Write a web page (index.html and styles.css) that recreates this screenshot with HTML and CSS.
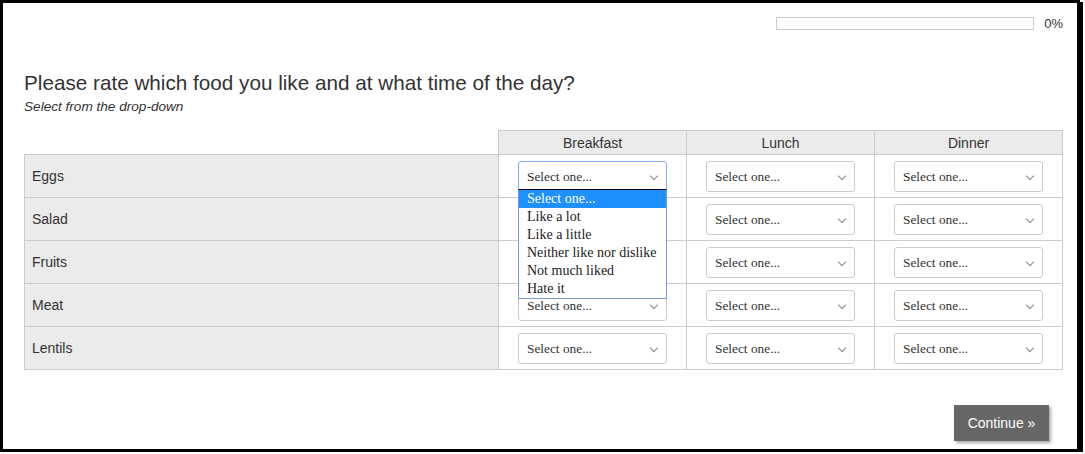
FILE: index.html
```html
<!DOCTYPE html>
<html lang="en">
<head>
  <meta charset="UTF-8" />
  <meta name="viewport" content="width=device-width, initial-scale=1.0"/>
  <title>Food Survey</title>
  <link rel="stylesheet" href="styles.css">
</head>
<body>

<div class="frame">
  <!-- Progress -->
  <div class="progress">
    <div class="progress-bar"><div class="progress-fill"></div></div>
    <span class="progress-text">0%</span>
  </div>

  <!-- Question -->
  <h1 class="question">Please rate which food you like and at what time of the day?</h1>
  <p class="hint">Select from the drop-down</p>

  <table class="matrix">
    <thead>
      <tr>
        <th class="blank"></th>
        <th>Breakfast</th>
        <th>Lunch</th>
        <th>Dinner</th>
      </tr>
    </thead>
    <tbody>
      <tr>
        <td class="label">Eggs</td>
        <td>
          <div class="select focused">
            <span class="select-value">Select one...</span>
            <ul class="dropdown">
              <li class="active">Select one...</li>
              <li>Like a lot</li>
              <li>Like a little</li>
              <li>Neither like nor dislike</li>
              <li>Not much liked</li>
              <li>Hate it</li>
            </ul>
          </div>
        </td>
        <td><div class="select"><span class="select-value">Select one...</span></div></td>
        <td><div class="select"><span class="select-value">Select one...</span></div></td>
      </tr>
      <tr>
        <td class="label">Salad</td>
        <td><div class="select"><span class="select-value">Select one...</span></div></td>
        <td><div class="select"><span class="select-value">Select one...</span></div></td>
        <td><div class="select"><span class="select-value">Select one...</span></div></td>
      </tr>
      <tr>
        <td class="label">Fruits</td>
        <td><div class="select"><span class="select-value">Select one...</span></div></td>
        <td><div class="select"><span class="select-value">Select one...</span></div></td>
        <td><div class="select"><span class="select-value">Select one...</span></div></td>
      </tr>
      <tr>
        <td class="label">Meat</td>
        <td><div class="select"><span class="select-value">Select one...</span></div></td>
        <td><div class="select"><span class="select-value">Select one...</span></div></td>
        <td><div class="select"><span class="select-value">Select one...</span></div></td>
      </tr>
      <tr>
        <td class="label">Lentils</td>
        <td><div class="select"><span class="select-value">Select one...</span></div></td>
        <td><div class="select"><span class="select-value">Select one...</span></div></td>
        <td><div class="select"><span class="select-value">Select one...</span></div></td>
      </tr>
    </tbody>
  </table>

  <div class="actions">
    <button class="btn-continue">Continue &raquo;</button>
  </div>
</div>

</body>
</html>
```

FILE: styles.css
```css
/* Basic reset */
* { margin: 0; padding: 0; box-sizing: border-box; }
body { font-family: "Liberation Sans", Arial, sans-serif; background: #fff; color: #333; }

/* Outer frame */
.frame { width: 1080px; height: 452px; border: 3px solid #000; box-shadow: 3px 2px 0 #000; padding: 0 14px 0 21px; background: #fff; }

/* Progress */
.progress { display: flex; justify-content: flex-end; align-items: center; gap: 10px; padding-top: 14px; }
.progress-bar { width: 258px; height: 13px; border: 1px solid #ccc; background: #fff; }
.progress-fill { width: 0; height: 100%; background: #666; }
.progress-text { font-size: 13px; color: #333; line-height: 13px; }

/* Question */
.question { font-size: 20.7px; font-weight: normal; line-height: 23px; margin-top: 41px; color: #333; }
.hint { font-size: 13.6px; font-style: italic; line-height: 15px; margin-top: 5px; color: #333; }

/* Matrix table */
.matrix { width: 1039px; margin-top: 16px; border-collapse: collapse; font-size: 14px; }
.matrix th { width: 188px; height: 24px; background: #ebebeb; border: 1px solid #ccc; font-weight: normal; color: #333; text-align: center; }
.matrix th.blank { width: auto; background: #fff; border: none; border-bottom: 1px solid #ccc; }
.matrix td { height: 43px; border: 1px solid #ccc; text-align: center; vertical-align: middle; }
.matrix td.label { background: #ebebeb; text-align: left; padding-left: 7px; color: #333; }

/* Select boxes */
.select { position: relative; display: inline-block; width: 149px; height: 31px; border: 1px solid #ccc; border-radius: 3px; background: #fff; text-align: left; vertical-align: middle; }
.select::after { content: ""; position: absolute; right: 9px; top: 11px; width: 5px; height: 5px; border-right: 1px solid #888; border-bottom: 1px solid #888; transform: rotate(45deg); }
.select-value { display: block; padding-left: 8px; line-height: 29px; font-family: "Liberation Serif", "Times New Roman", serif; font-size: 13.33px; color: #333; }
.select.focused { border-color: #86aef0; }

/* Open option list */
.dropdown { position: absolute; top: 27px; left: -1px; width: 149px; list-style: none; background: #fff; border: 1px solid #7a9cd3; border-top: 1px solid #000; z-index: 2; }
.dropdown li { height: 18px; line-height: 18px; padding-left: 8px; font-family: "Liberation Serif", "Times New Roman", serif; font-size: 14px; color: #222; white-space: nowrap; }
.dropdown li.active { background: #1e90ff; color: #fff; }

/* Continue */
.actions { display: flex; justify-content: flex-end; margin-top: 35px; }
.btn-continue { width: 95px; height: 36px; margin-right: 14px; border: none; background: #666; color: #fff; font-family: "Liberation Sans", Arial, sans-serif; font-size: 14px; box-shadow: 2px 2px 3px rgba(0,0,0,0.35); cursor: pointer; }
.btn-continue:hover { background: #555; }
```
